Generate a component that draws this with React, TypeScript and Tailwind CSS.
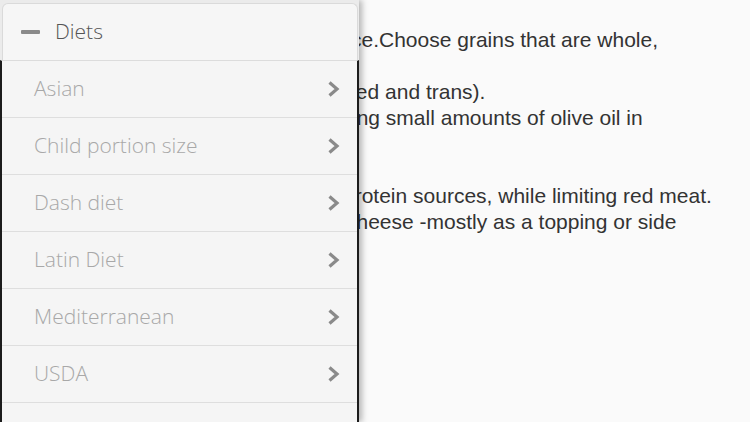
const diets = ["Asian", "Child portion size", "Dash diet", "Latin Diet", "Mediterranean", "USDA"];

// lines of the article that peek out from behind the drawer
const lines: { text: string; indent: string }[] = [
  { text: "ce.Choose grains that are whole,", indent: "ml-[351px]" },
  { text: "", indent: "ml-[351px]" },
  { text: "ted and trans).", indent: "ml-[350px]" },
  { text: "ing small amounts of olive oil in", indent: "ml-[352px]" },
  { text: "", indent: "ml-[351px]" },
  { text: "", indent: "ml-[351px]" },
  { text: "protein sources, while limiting red meat.", indent: "ml-[343px]" },
  { text: "cheese -mostly as a topping or side", indent: "ml-[346px]" },
];

function Chevron() {
  return (
    <svg width="13" height="18" viewBox="0 0 13 18" className="text-[#8a8a8a]">
      <polyline
        points="2.5,2.5 10,9 2.5,15.5"
        fill="none"
        stroke="currentColor"
        strokeWidth="3.2"
        strokeLinecap="butt"
        strokeLinejoin="miter"
      />
    </svg>
  );
}

export default function App() {
  return (
    <div className="relative w-[750px] h-[422px] overflow-hidden bg-[#fafafa]">
      {/* ── Article behind ─────────────────────────── */}
      <div
        className="pt-[27px] text-[21px] leading-[26px] text-[#333]"
        style={{ fontFamily: '"Liberation Sans", Arial, sans-serif' }}
      >
        {lines.map((l, i) => (
          <p key={i} className={`${l.indent} h-[26px] whitespace-nowrap`}>
            {l.text}
          </p>
        ))}
      </div>

      {/* ── Drawer ─────────────────────────────────── */}
      <div
        className="absolute left-0 top-0 h-full w-[359px] bg-[#ebebeb] pt-[3px] shadow-[3px_0_6px_rgba(0,0,0,0.28)] flex flex-col"
        style={{ fontFamily: '"Open Sans", "Noto Sans", sans-serif' }}
      >
        <div className="ml-[2px] mr-[1px] h-[57px] shrink-0 rounded-t-[6px] border border-b-0 border-[#dadada] bg-[#f6f6f6] flex items-center">
          <div className="ml-[18px] w-[19px] h-[4px] rounded-[1px] bg-[#8a8a8a]" />
          <span className="ml-[15px] text-[21px] font-light text-[#555]">Diets</span>
        </div>
        <div className="flex-1 border-x-2 border-[#1c1c1c] border-t border-t-[#dcdcdc] bg-[#f5f5f5]">
          {diets.map((d) => (
            <div
              key={d}
              className="h-[57px] border-b border-[#dedede] flex items-center pl-[32px] pr-[17px]"
            >
              <span className="flex-1 text-[21px] font-light text-[#a8a8a8]">{d}</span>
              <Chevron />
            </div>
          ))}
        </div>
      </div>
    </div>
  );
}
